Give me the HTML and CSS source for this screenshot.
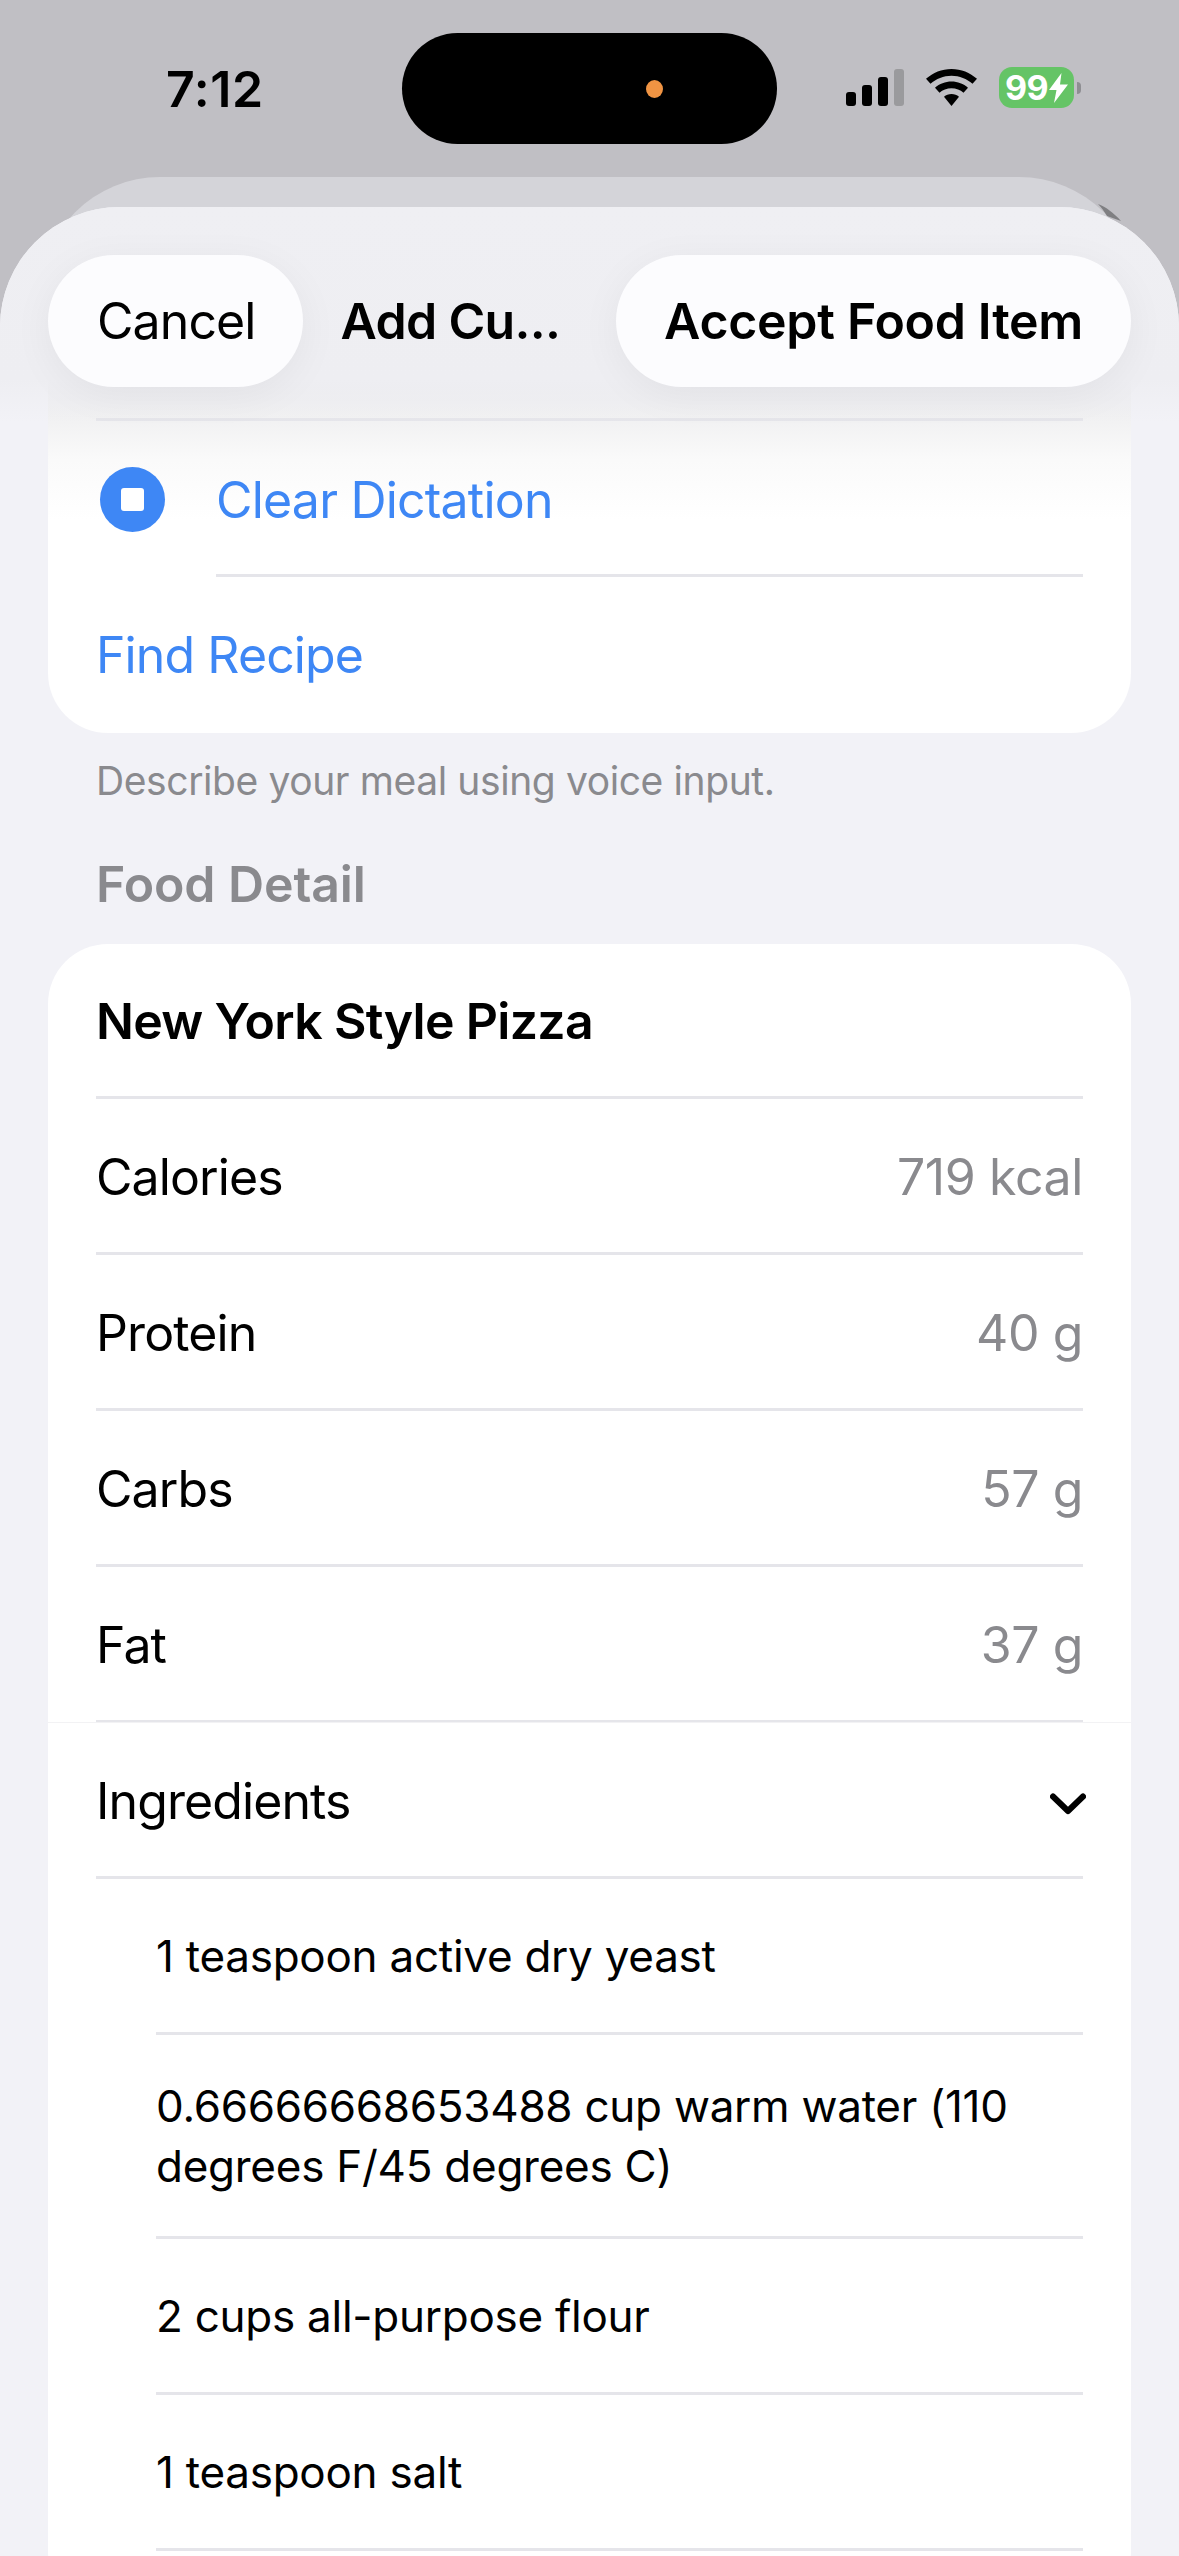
FILE: index.html
```html
<!DOCTYPE html>
<html lang="en">
<head>
    <meta charset="UTF-8">
    <meta name="viewport" content="width=device-width, initial-scale=1.0">
    <title>Add Custom Food</title>
    <link rel="stylesheet" href="styles.css">
</head>
<body>
    <div class="screen">
        <!-- Status bar -->
        <div class="status-bar">
            <div class="time">7:12</div>
            <div class="island"><span class="island-dot"></span></div>
            <div class="status-icons">
                <svg class="icon-signal" width="58" height="37" viewBox="0 0 58 37">
                    <rect x="0" y="23" width="10" height="14" rx="3" fill="#000"/>
                    <rect x="16" y="16" width="10" height="21" rx="3" fill="#000"/>
                    <rect x="32" y="8" width="10" height="29" rx="3" fill="#000"/>
                    <rect x="48" y="0" width="10" height="37" rx="3" fill="#9a9a9d"/>
                </svg>
                <svg class="icon-wifi" width="51" height="37" viewBox="0 0 51 37">
                    <path d="M25.500 0C15.800 0 7 3.700 0 9.800L4.500 14.800C10.200 9.800 17.500 6.800 25.500 6.800S40.800 9.800 46.500 14.800L51 9.800C44 3.700 35.200 0 25.500 0Z" fill="#000"/>
                    <path d="M25.500 12.500C19.300 12.500 13.500 14.800 9 18.700L13.500 23.700C16.700 21 20.900 19.300 25.500 19.300S34.300 21 37.500 23.700L42 18.700C37.500 14.800 31.700 12.500 25.500 12.500Z" fill="#000"/>
                    <path d="M25.500 25C22.600 25 20 26 18 27.700L25.500 37L33 27.700C31 26 28.400 25 25.500 25Z" fill="#000"/>
                </svg>
                <div class="battery">
                    <div class="battery-body">
                        <span class="battery-level">99</span>
                        <svg width="19" height="30" viewBox="0 0 19 30">
                            <path d="M12.500 0L0 17H7.500L5 30L19 11.500H11Z" fill="#fff"/>
                        </svg>
                    </div>
                    <span class="battery-nub"></span>
                </div>
            </div>
        </div>

        <!-- corner of the sheet further back, only a sliver shows -->
        <svg class="far-sheet-corner" width="24" height="18" viewBox="0 0 24 18">
            <path d="M0 0C8 3 16 9 23 17L9 12C6 7 3 3 0 0Z" fill="#7f7f82"/>
        </svg>
        <div class="back-sheet"></div>

        <div class="sheet">
            <!-- Floating nav bar -->
            <div class="nav-fade"></div>
            <div class="nav">
                <div class="pill">Cancel</div>
                <div class="nav-title">Add Cu...</div>
                <div class="pill pill-strong">Accept Food Item</div>
            </div>

            <div class="card card-voice">
                <div class="row row-dictation">
                    <span class="stop-button"><span class="stop-square"></span></span>
                    <div class="row-dictation-label">Clear Dictation</div>
                </div>
                <div class="row row-link row-plain">Find Recipe</div>
            </div>
            <p class="caption">Describe your meal using voice input.</p>
            <h2 class="section-title">Food Detail</h2>

            <div class="card card-detail">
                <div class="row row-title">New York Style Pizza</div>
                <div class="row"><span>Calories</span><span class="value">719 kcal</span></div>
                <div class="row"><span>Protein</span><span class="value">40 g</span></div>
                <div class="row"><span>Carbs</span><span class="value">57 g</span></div>
                <div class="row"><span>Fat</span><span class="value">37 g</span></div>
                <div class="disclosure">
                    <div class="row">
                        <span>Ingredients</span>
                        <svg class="chevron" width="36" height="22" viewBox="0 0 36 22">
                            <path d="M3 3.500L18 18L33 3.500" fill="none" stroke="#000" stroke-width="6" stroke-linecap="round" stroke-linejoin="round"/>
                        </svg>
                    </div>
                    <div class="row row-sub">1 teaspoon active dry yeast</div>
                    <div class="row row-sub row-tall">0.66666668653488 cup warm water (110 degrees F/45 degrees C)</div>
                    <div class="row row-sub">2 cups all-purpose flour</div>
                    <div class="row row-sub">1 teaspoon salt</div>
                </div>
            </div>
        </div>
    </div>
</body>
</html>
```

FILE: styles.css
```css
* {
    box-sizing: border-box;
}
html, body {
    margin: 0;
    padding: 0;
}
body {
    width: 1179px;
    height: 2556px;
    overflow: hidden;
    background-color: #c0bfc4;
    font-family: Inter, "Liberation Sans", sans-serif;
    color: #000;
}
.screen {
    position: relative;
    height: 2556px;
    overflow: hidden;
}

/* Status bar */
.status-bar {
    height: 177px;
    padding: 33px 98px 0 166px;
    display: flex;
    align-items: flex-start;
}
.time {
    width: 236px;
    margin-top: 25px;
    font-size: 50px;
    line-height: 62px;
    font-weight: 600;
    letter-spacing: 0.6px;
}
.island {
    width: 375px;
    height: 111px;
    border-radius: 56px;
    background-color: #000;
    display: flex;
    align-items: center;
    justify-content: flex-end;
    padding-right: 114px;
}
.island-dot {
    width: 17px;
    height: 18px;
    border-radius: 50%;
    background-color: #f09443;
}
.status-icons {
    margin-left: 69px;
    margin-top: 36px;
    display: flex;
    align-items: flex-start;
}
.icon-wifi {
    margin-left: 22px;
}
.battery {
    margin-left: 22px;
    margin-top: -2px;
    display: flex;
    align-items: center;
}
.battery-body {
    width: 75px;
    height: 41px;
    border-radius: 13px;
    background-color: #65c466;
    display: flex;
    align-items: center;
    justify-content: center;
    gap: 1px;
}
.battery-level {
    color: #fff;
    font-size: 34px;
    line-height: 41px;
    font-weight: 700;
    letter-spacing: -0.5px;
}
.battery-nub {
    width: 4px;
    height: 12px;
    margin-left: 3px;
    border-radius: 0 4px 4px 0;
    background-color: #8e8e92;
}

/* Sheets */
.far-sheet-corner {
    position: absolute;
    top: 204px;
    left: 1098px;
}
.back-sheet {
    height: 160px;
    margin: 0 40px -130px;
    border-radius: 120px 120px 0 0;
    background-color: #d4d4d9;
}
.sheet {
    position: relative;
    height: 2349px;
    padding: 60px 48px 0;
    border-radius: 120px 120px 0 0;
    background-color: #f2f2f7;
    overflow: hidden;
}
.nav-fade {
    position: absolute;
    top: 0;
    left: 0;
    right: 0;
    height: 215px;
    z-index: 2;
    background: linear-gradient(to bottom, #efeff3 0%, #eeeef2 80%, rgba(240, 240, 244, 0) 100%);
}
.nav {
    position: absolute;
    top: 48px;
    left: 48px;
    right: 48px;
    z-index: 3;
    display: flex;
    align-items: center;
}
.pill {
    height: 132px;
    padding: 0 47px 0 49px;
    border-radius: 66px;
    background-color: #fcfcfe;
    box-shadow: 0 8px 40px rgba(0, 0, 0, 0.05);
    display: flex;
    align-items: center;
    font-size: 50px;
    letter-spacing: -0.9px;
}
.pill-strong {
    margin-left: auto;
    padding: 0 48px;
    font-weight: 600;
    letter-spacing: -0.3px;
}
.nav-title {
    margin-left: 38px;
    font-size: 50px;
    font-weight: 600;
    letter-spacing: -0.7px;
}

/* Cards */
.card {
    padding: 0 48px;
    border-radius: 60px;
    background-color: #fff;
    overflow: hidden;
}
.card-voice {
    padding-top: 151px;
    background: linear-gradient(to bottom, #ebebee 0, #ebebee 120px, #f1f1f2 151px, #fafafa 193px, #fff 253px);
}
.card-detail {
    padding-bottom: 60px;
}
.row {
    height: 156px;
    padding-top: 2px;
    border-bottom: 3px solid #e5e5ea;
    display: flex;
    align-items: center;
    justify-content: space-between;
    font-size: 50px;
    letter-spacing: -0.9px;
}
.card-voice .row-dictation {
    height: 159px;
    padding-top: 0;
    border-top: 3px solid #e5e5ea;
    border-bottom: none;
    justify-content: flex-start;
}
.stop-button {
    width: 65px;
    height: 65px;
    margin-left: 4px;
    border-radius: 50%;
    background-color: #3e87f5;
    display: flex;
    align-items: center;
    justify-content: center;
}
.stop-square {
    width: 23px;
    height: 23px;
    border-radius: 3px;
    background-color: #fff;
}
.row-dictation-label {
    align-self: stretch;
    flex: 1;
    margin-left: 51px;
    padding-top: 4px;
    border-bottom: 3px solid #e5e5ea;
    display: flex;
    align-items: center;
    letter-spacing: -0.8px;
    color: #3e87f5;
}
.row-link {
    color: #3e87f5;
}
.row-plain {
    padding-top: 0;
    border-bottom: none;
}
.caption {
    margin: 24px 48px 0;
    font-size: 39px;
    line-height: 48px;
    letter-spacing: -0.4px;
    color: #8a8a8e;
}
.section-title {
    margin: 48px 48px 29px;
    font-size: 50px;
    line-height: 62px;
    font-weight: 600;
    letter-spacing: -0.1px;
    color: #8a8a8e;
}
.row-title {
    height: 155px;
    font-weight: 600;
    letter-spacing: -0.7px;
}
.value {
    color: #8a8a8e;
    letter-spacing: -0.4px;
}
.disclosure {
    margin: -1px -48px 0;
    padding: 0 48px;
    border-top: 1px solid #f2f2f4;
}
.chevron {
    margin-top: 7px;
    margin-right: -3px;
}
.row-sub {
    margin-left: 60px;
    padding-top: 0;
    justify-content: flex-start;
    font-size: 44px;
    letter-spacing: -0.26px;
}
.row-tall {
    height: 204px;
    line-height: 60px;
}
```
